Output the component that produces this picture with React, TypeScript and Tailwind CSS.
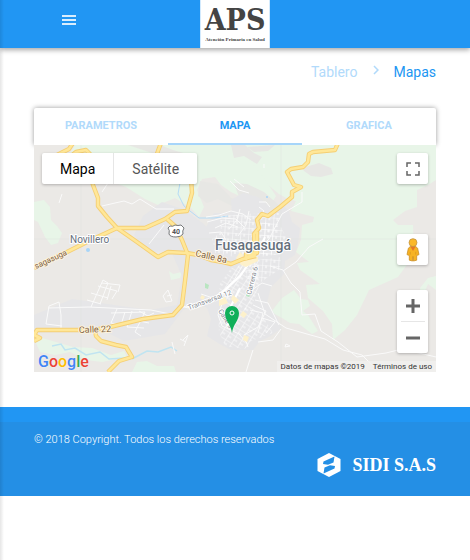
import { useState } from 'react'
import { MdChevronRight } from 'react-icons/md'

const TABS = ['PARAMETROS', 'MAPA', 'GRAFICA']

const HIGHWAYS = [
  'M73 143 L69 149 L57 155 L50 163 M93 183 L90 174 L90 154 L86 150 L76 152 L66 160',
  'M91 178 L93 185 L98 198 L98 206 L107 217 L117 228 L137 242 L158 257 L168 252 L187 253 L198 255 L211 260 L223 262 L231 264 L243 259 L256 256',
  'M117 228 L91 240 L65 253 L34 268',
  'M117 228 L145 228 L165 219 L175 212 L187 211 L192 193 L191 178 L166 172 L155 160 L158 151 L161 143',
  'M167 219 L175 226 L182 240 L188 255 L185 281 L182 305 L173 315 L143 319 L110 327 L94 330 L37 330 L34 335 L40 338 L34 341',
  'M95 330 L96 336 L101 341 L116 345 L126 347 L132 357 L119 361 L108 372',
  'M338 143 L335 150 L313 152 L309 154 L308 162 L303 167 L291 169 L287 172 L294 185 L301 187 L292 192 L292 197 L280 207 L268 216 L262 214 L257 220 L259 228 L254 234 L255 254 L245 258',
  'M246 260 L246 254 L257 253 L257 232',
]

const GREENS = [
  'M231 145 L436 145 L436 180 L428 185 L417 190 L417 207 L405 211 L393 220 L398 225 L413 225 L414 255 L398 277 L369 290 L357 315 L345 330 L333 340 L332 324 L323 311 L308 298 L306 285 L320 284 L300 270 L297 263 L309 262 L296 252 L301 240 L302 225 L313 222 L314 217 L291 211 L296 201 L288 199 L279 194 L261 179 L249 180 L237 171 L232 158 Z',
  'M75 145 L235 145 L244 153 L264 178 L276 196 L270 206 L246 199 L231 192 L221 185 L215 177 L202 179 L197 190 L204 207 L199 217 L191 208 L175 198 L158 205 L145 199 L126 187 L111 181 L98 184 L79 178 L67 160 Z',
  'M34 202 L44 200 L50 207 L51 220 L57 226 L62 233 L58 243 L51 245 L45 237 L38 222 L34 220 Z',
  'M271 312 L282 298 L294 290 L301 299 L308 300 L310 306 L303 311 L308 315 L318 331 L312 334 L299 324 L290 323 L282 318 Z',
  'M36 343 L42 338 L56 342 L73 347 L92 348 L111 355 L124 351 L127 357 L102 362 L86 360 L70 352 L55 355 L40 352 Z',
  'M132 372 L137 362 L147 361 L157 366 L174 366 L176 372 Z',
  'M420 288 L428 278 L436 276 L436 290 L428 284 L422 298 Z',
  'M169 271 L173 274 L182 272 L180 278 L171 280 Z',
]

const URBAN = [
  'M263 212 L275 211 L282 204 L289 211 L292 222 L300 228 L298 244 L295 255 L285 261 L284 274 L271 287 L267 303 L278 319 L281 329 L269 337 L260 341 L253 350 L231 350 L218 343 L207 336 L211 319 L207 308 L194 301 L190 286 L195 263 L212 254 L212 237 L206 227 L214 213 L226 213 L242 207 Z',
  'M143 216 L162 202 L183 209 L204 224 L217 243 L210 269 L199 303 L183 310 L165 334 L124 341 L106 332 L34 333 L34 315 L72 299 L150 310 L177 305 L182 276 L171 251 L149 252 L134 235 Z',
  'M231 200 L243 193 L258 197 L270 207 L268 217 L246 226 L232 214 Z',
]

const HILLS = [
  'M128 145 L160 145 L173 150 L190 155 L191 161 L174 159 L155 154 Z',
  'M200 181 L218 184 L231 198 L245 201 L251 211 L236 208 L218 199 L207 203 L198 196 Z',
  'M231 145 L245 145 L254 153 L262 157 L257 164 L244 156 L234 158 Z',
  'M302 168 L319 163 L331 168 L333 174 L321 177 L311 176 L304 171 Z',
  'M247 147 L275 145 L268 151 L254 152 Z',
  'M234 183 L247 184 L264 192 L281 207 L291 211 L276 212 L253 204 L239 197 Z',
]

const STREETS = [
  'M102 206 L115 203 L124 201 L132 204 L140 199 L156 209 L174 209',
  'M149 244 L164 225 M59 203 L62 194 M102 192 L110 180',
  'M48 308 L89 307 L151 310 L175 315 M61 331 L61 315 L59 302 L49 306 L46 324 L62 326',
  'M91 307 L103 280 L108 283 L100 304 M87 300 L101 304 M91 293 L108 298 M98 286 L117 291 L112 299 M102 283 L120 285 L118 292 M111 286 L107 300',
  'M117 309 L111 323 L121 325 L125 312 M111 313 L145 312 L135 332 L141 336 M132 311 L127 327 L144 328 M139 311 L148 316 L154 313 M134 320 L149 323',
  'M163 296 L168 290 L172 301 L166 302 Z M183 307 L190 308 M167 296 L172 295',
  'M183 340 L188 335 L184 346 M180 339 L186 342',
  'M201 294 L216 299 L233 282 L247 267 L257 251 L269 239 L282 214 L302 202 L302 192',
  'M180 307 L197 305 L213 298 L226 288 L234 280 L247 258 L258 257',
  'M270 266 L283 270 L291 283 L300 292 L302 315 L315 314 L321 331 L338 342 L357 357 L386 353 L402 349 L436 357',
  'M258 293 L265 314 L286 328 L307 334 L325 339 L343 350 L362 355 L375 368',
  'M283 271 L296 262 L309 247 L323 239 M253 350 L246 372 M281 329 L273 340 L258 342',
  'M248 347 L244 335 L258 327 L266 311 L253 305 M225 296 L218 315 L222 326 L239 334 L247 343',
  'M230 181 L239 190 L249 193 M259 202 L266 202 L270 207 M259 207 L264 211 L261 215 M172 342 L175 354',
  'M290 346 L286 344 L285 347 Z M264 164 L264 168 M234 179 L244 187',
  'M206 217 L219 215 L231 211 L243 214 L251 220 M207 222 L222 218 L236 219 L244 227 M215 228 L226 223 L238 227 M209 233 L221 232 L226 240 M240 209 L237 220 L229 229 M249 211 L246 225 L238 236',
  'M252 290 L262 283 L272 286 M255 300 L268 303 L279 325 M250 310 L263 313 L258 333 M262 318 L275 322 L266 333',
]

function MapArt() {
  return (
    <svg
      viewBox="34 145 402 227"
      preserveAspectRatio="xMidYMid slice"
      className="absolute inset-0 h-full w-full"
      aria-hidden="true"
    >
      <defs>
        <pattern id="blocks" width="8" height="6" patternUnits="userSpaceOnUse" patternTransform="rotate(4)">
          <path d="M0 0H8 M0 0V6 M4 0V3" stroke="#fff" strokeWidth="1.2" fill="none" />
        </pattern>
        <pattern id="blocksTilted" width="7" height="8" patternUnits="userSpaceOnUse" patternTransform="rotate(32)">
          <path d="M0 0H7 M0 0V8 M0 4H4" stroke="#fff" strokeWidth="1.2" fill="none" />
        </pattern>
      </defs>
      <rect x="34" y="145" width="402" height="227" fill="#ebe9e6" />
      {GREENS.map((d) => <path key={d} d={d} fill="#e8f5e8" />)}
      {HILLS.map((d) => <path key={d} d={d} fill="#e7e7e4" />)}
      {URBAN.map((d) => <path key={d} d={d} fill="#e6e6e8" />)}
      <path d="M81 145V372 M281 145V372 M34 239H436" stroke="#dfe2df" strokeWidth="1" opacity=".4" />
      <path d="M180 183 L178 194 L184 206 L190 211 L199 218 L214 218 L228 216" fill="none" stroke="#b5dcf6" strokeWidth="1" />
      <path d="M52 346 L61 344 L65 350 L75 348 L86 355 L100 352 L109 359 L125 358 M132 359 L147 351 L158 352 L171 347 L177 351" fill="none" stroke="#c0e4f1" strokeWidth="1.5" />
      <circle cx="88" cy="250" r="2" fill="#a8d5f8" />
      <circle cx="267" cy="197" r="1" fill="#a8d5f8" />
      <path d="M220 216 L260 213 L281 213 L274 238 L272 254 L240 258 L215 253 L212 239 L221 232 Z" fill="url(#blocks)" opacity=".8" />
      <path d="M262 221 L281 227 L287 239 L282 254 L260 257 Z M247 261 L281 257 L280 269 L258 284 L246 279 Z" fill="url(#blocks)" opacity=".8" />
      <path d="M232 267 L258 261 L260 283 L251 309 L236 310 L218 300 L220 284 Z" fill="url(#blocksTilted)" opacity=".8" />
      <path d="M218 310 L251 307 L264 318 L273 333 L251 341 L245 349 L225 346 L219 332 Z" fill="url(#blocksTilted)" opacity=".75" />
      {STREETS.map((d) => <path key={d} d={d} fill="none" stroke="#fafafa" strokeWidth="1" strokeLinejoin="round" />)}
      <path d="M188 307 L200 303 L219 296 L240 276 L247 266 L256 252 M257 254 L265 237 M240 288 L231 306 L228 325" fill="none" stroke="#fff" strokeWidth="2" />
      <path d="M205 283 L209 285 L208 289 L205 288 Z M247 293 L251 294 L249 297 L246 296 Z" fill="#b9e5c1" />
      <path d="M236 258 L240 252 L244 256 L258 257 L258 261 L246 267 L241 265 Z M219 298 L225 297 L228 303 L219 306 Z M202 295 L205 297 L203 300 L200 298 Z M233 295 L239 300 L235 304 L231 299 Z M243 311 L247 314 L244 318 L240 315 Z M244 335 L249 337 L247 342 L243 340 Z" fill="#fdf1cb" />
      {HIGHWAYS.map((d) => <path key={d} d={d} fill="none" stroke="#f5cf74" strokeWidth="4.4" strokeLinejoin="round" />)}
      {HIGHWAYS.map((d) => <path key={d} d={d} fill="none" stroke="#ffe798" strokeWidth="2.6" strokeLinejoin="round" />)}

      {/* route shield */}
      <path d="M170 226 Q173 227 175 225 Q178 226 181 225 L184 228 Q182 231 183 234 Q181 237 176 237 Q170 237 169 234 Q170 230 168 228 Z" fill="#fff" stroke="#77797b" strokeWidth="1" />
      <g fontFamily="Roboto, sans-serif" stroke="#fff" strokeWidth="2" paintOrder="stroke" strokeLinejoin="round">
        <text x="176" y="234" fontSize="7" fontWeight="700" textAnchor="middle" fill="#555" stroke="none">40</text>
        <text x="70" y="243" fontSize="10" fill="#66707d">Novillero</text>
        <text x="215" y="250" fontSize="14" fontWeight="500" fill="#65707b">Fusagasugá</text>
        <g fill="#80603e" stroke="#fdf3dc" fontSize="9" fontWeight="400">
          <text x="195" y="256" transform="rotate(13 195 256)">Calle 8a</text>
          <text x="79" y="333" transform="rotate(-2 79 333)">Calle 22</text>
          <text x="36" y="269" fontSize="8" transform="rotate(-25 36 269)">sagasuga</text>
        </g>
        <g fill="#858990" fontSize="7">
          <text x="189" y="310" transform="rotate(-20 189 310)">Transversal 12</text>
          <text x="251" y="295" transform="rotate(-76 251 295)">Carrera 6</text>
          <text x="218" y="311" transform="rotate(58 218 311)">Calle 9</text>
        </g>
      </g>

      {/* marker */}
      <path d="M232 333 C231 324 225 321 225 313 A7 7 0 0 1 239 313 C239 321 233 324 232 333 Z" fill="#0faf59" />
      <circle cx="232" cy="313" r="2" fill="#0faf59" stroke="#fff" strokeWidth="1" />
    </svg>
  )
}

function Pegman() {
  return (
    <svg viewBox="0 0 16 26" className="h-6 w-4" aria-hidden="true">
      <path d="M3 11 Q4 9 8 9 Q12 9 13 11 L14.5 18 L12 19 L12 24 L8.5 25 L8 20 L7.5 25 L4 24 L4 19 L1.5 18 Z" fill="#f7b323" stroke="#c98a20" strokeWidth=".8" />
      <path d="M5 9 L11 9 L8 14 Z" fill="#e87624" />
      <circle cx="8" cy="5" r="4.3" fill="#fbb829" stroke="#bd9044" strokeWidth=".8" />
      <path d="M5 15V18 M11 15V18" stroke="#d6921f" strokeWidth=".8" />
    </svg>
  )
}

function SidiLogo() {
  return (
    <svg viewBox="0 0 24 24" className="h-6 w-6" aria-hidden="true">
      <path d="M12 0 L23.5 6 V18 L12 24 L0.5 18 V6 Z" fill="#fff" />
      <path d="M6.5 8.5 L17.5 3.5 L16.5 9.5 L11 11.8 L6 11 Z" fill="#248fe5" />
      <path d="M17.5 15.5 L6.5 20.5 L7.5 14.5 L13 12.2 L18 13 Z" fill="#248fe5" />
    </svg>
  )
}

export default function App() {
  const [tab, setTab] = useState('MAPA')
  const [view, setView] = useState('Mapa')

  return (
    <div className="relative min-h-screen bg-white font-['Roboto',sans-serif]">
      <header className="relative grid h-12 grid-cols-3 items-center bg-[#2196f3] px-8.5 shadow-[0_2px_5px_rgba(0,0,0,0.35)]">
        <button aria-label="Menú" className="mb-2 ml-7 w-3.5">
          <svg viewBox="0 0 14 10" className="w-3.5" stroke="#d9edfd" strokeWidth="2" aria-hidden="true">
            <path d="M0 1H14 M0 5H14 M0 9H14" />
          </svg>
        </button>
        <a href="#inicio" className="flex h-12 w-[70px] flex-col items-center justify-self-center border-x border-[#d3eafd] bg-white text-[#444]">
          <span className="mt-1 font-['DejaVu_Serif_Condensed','DejaVu_Serif',serif] text-[30px] leading-8 font-bold">APS</span>
          <span className="font-['Liberation_Serif',serif] text-[5px] leading-2 font-bold whitespace-nowrap">Atención Primaria en Salud</span>
        </a>
      </header>

      <main className="px-8.5">
        <nav className="mb-3 flex h-12 items-center justify-end text-sm">
          <a href="#tablero" className="text-[#b1dafb]">Tablero</a>
          <MdChevronRight size={18} className="mr-2 mb-1 ml-2.5 text-[#b1dafb]" />
          <a href="#mapas" className="text-[#2196f3]">Mapas</a>
        </nav>

        <div className="grid h-[37px] grid-cols-3 rounded-t-xs bg-white shadow-[0_0_5px_rgba(0,0,0,0.4)]">
          {TABS.map((name) => (
            <button
              key={name}
              onClick={() => setTab(name)}
              className={`border-b-2 pt-0.5 text-[11px] font-bold ${name === tab ? 'border-[#a6d5fa] text-[#2196f3]' : 'border-transparent text-[#b1dafb]'}`}
            >
              {name}
            </button>
          ))}
        </div>

        <section aria-label="Mapa de Fusagasugá" className="relative h-[227px] overflow-hidden">
          <MapArt />
          <div className="absolute top-2 left-2 flex h-[31px] rounded-xs bg-white text-sm shadow-[0_1px_3px_rgba(0,0,0,0.25)]">
            {['Mapa', 'Satélite'].map((name) => (
              <button
                key={name}
                onClick={() => setView(name)}
                className={`border-r border-[#e6e6e6] px-[18px] last:border-r-0 ${name === view ? 'text-black' : 'text-[#565656]'}`}
              >
                {name}
              </button>
            ))}
          </div>
          <button aria-label="Pantalla completa" className="absolute top-2 right-2 grid size-[31px] place-items-center rounded-xs bg-white shadow-[0_1px_3px_rgba(0,0,0,0.25)]">
            <svg viewBox="0 0 14 14" className="size-3.5" fill="none" stroke="#666" strokeWidth="1.5" aria-hidden="true">
              <path d="M1 5V1H5 M9 1H13V5 M13 9V13H9 M5 13H1V9" />
            </svg>
          </button>
          <button aria-label="Street View" className="absolute top-[89px] right-2 grid size-[31px] place-items-center rounded-xs bg-white shadow-[0_1px_3px_rgba(0,0,0,0.25)]">
            <Pegman />
          </button>
          <div className="absolute right-2 bottom-[19px] flex w-[31px] flex-col items-center rounded-xs bg-white shadow-[0_1px_3px_rgba(0,0,0,0.25)]">
            <button aria-label="Acercar" className="grid size-[31px] place-items-center">
              <svg viewBox="0 0 14 14" className="size-3.5" stroke="#666" strokeWidth="3" aria-hidden="true"><path d="M0 7H14 M7 0V14" /></svg>
            </button>
            <span className="h-px w-6 bg-[#e6e6e6]" />
            <button aria-label="Alejar" className="grid size-[31px] place-items-center">
              <svg viewBox="0 0 14 14" className="size-3.5" stroke="#666" strokeWidth="3" aria-hidden="true"><path d="M0 7H14" /></svg>
            </button>
          </div>
          <a href="#google" className="absolute bottom-0 left-1 text-base leading-5 font-medium [text-shadow:0_0_1px_#fff]">
            <span className="text-[#4285f4]">G</span>
            <span className="text-[#ea4335]">o</span>
            <span className="text-[#fbbc05]">o</span>
            <span className="text-[#4285f4]">g</span>
            <span className="text-[#34a853]">l</span>
            <span className="text-[#ea4335]">e</span>
          </a>
          <div className="absolute right-0 bottom-0 flex gap-2 bg-[#f1f0ef]/80 px-1 text-[8px] leading-[11px] text-[#333]">
            <span>Datos de mapas ©2019</span>
            <a href="#terminos">Términos de uso</a>
          </div>
        </section>
      </main>

      <footer className="mt-[35px] bg-[#2196f3] pt-[15px]">
        <div className="h-[74px] bg-[#248fe5] px-8.5 pt-2 text-white">
          <p className="text-[11px] leading-5 font-light text-white">© 2018 Copyright. Todos los derechos reservados</p>
          <a href="#sidi" className="flex items-center justify-end gap-[11px] pt-[3px]">
            <SidiLogo />
            <span className="font-['Liberation_Serif',serif] text-lg leading-6 font-bold">SIDI S.A.S</span>
          </a>
        </div>
      </footer>
      <div className="pointer-events-none absolute inset-y-0 left-0 w-1 bg-linear-to-r from-black/10 to-transparent" />
    </div>
  )
}
